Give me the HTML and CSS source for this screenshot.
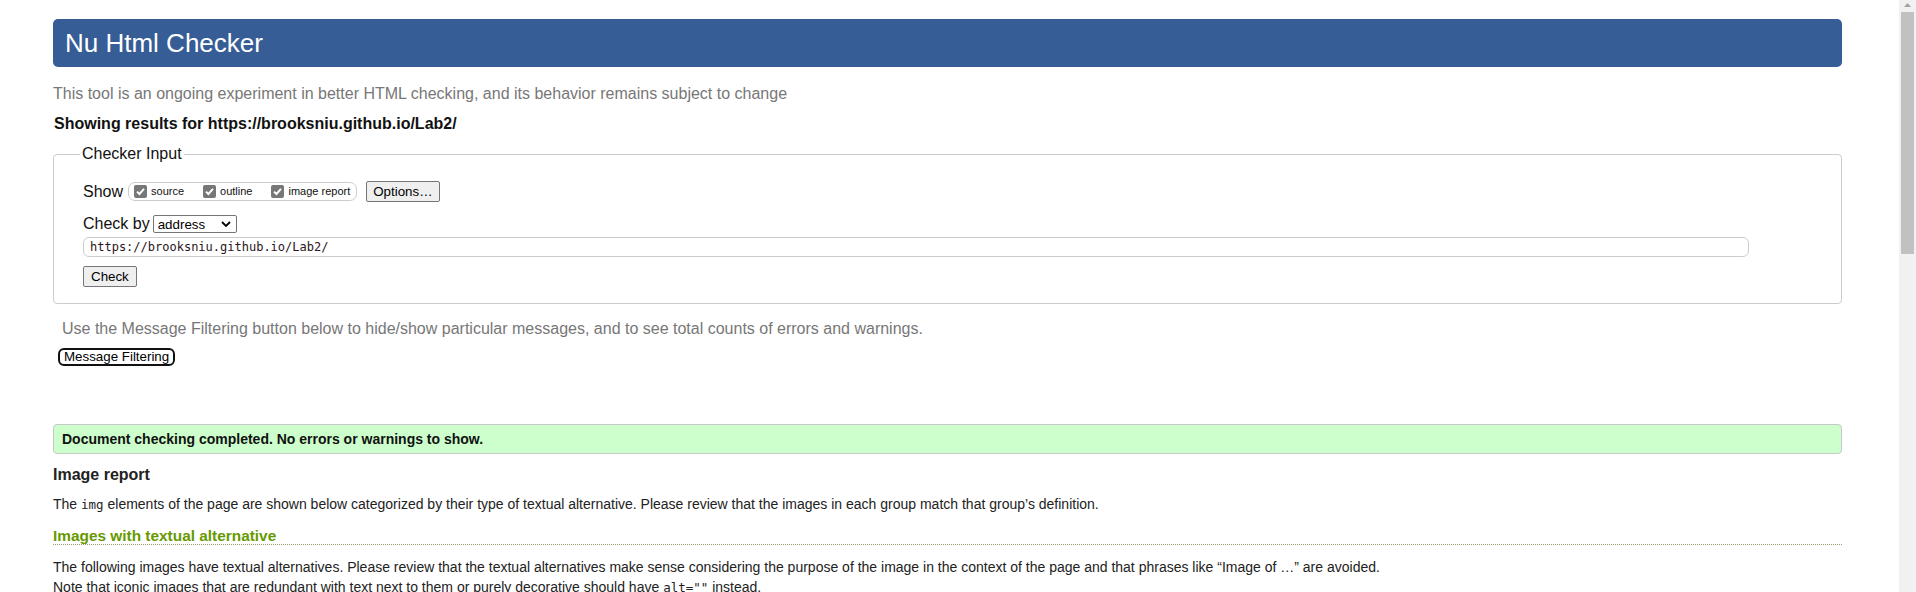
FILE: index.html
```html
<!DOCTYPE html>
<html lang="en">
<head>
<meta charset="utf-8">
<title>Showing results for https://brooksniu.github.io/Lab2/ - Nu Html Checker</title>
<link rel="stylesheet" href="styles.css">
</head>
<body>
<div class="page">
  <main class="main">
    <h1 class="masthead">Nu Html Checker</h1>
    <p class="about">This tool is an ongoing experiment in better HTML checking, and its behavior remains subject to change</p>
    <p class="showing">Showing results for https://brooksniu.github.io/Lab2/</p>
    <fieldset class="checker">
      <legend class="checker-legend">Checker Input</legend>
      <div class="row row-show">
        <span class="row-label">Show</span>
        <div class="show-group">
          <label class="opt"><span class="cb"><svg width="11" height="11" viewBox="0 0 11 11"><path d="M2 5.6 L4.4 8 L9 2.8" fill="none" stroke="#fff" stroke-width="1.9"/></svg></span><span>source</span></label>
          <label class="opt"><span class="cb"><svg width="11" height="11" viewBox="0 0 11 11"><path d="M2 5.6 L4.4 8 L9 2.8" fill="none" stroke="#fff" stroke-width="1.9"/></svg></span><span>outline</span></label>
          <label class="opt"><span class="cb"><svg width="11" height="11" viewBox="0 0 11 11"><path d="M2 5.6 L4.4 8 L9 2.8" fill="none" stroke="#fff" stroke-width="1.9"/></svg></span><span>image report</span></label>
        </div>
        <button class="btn btn-options" type="button">Options…</button>
      </div>
      <div class="row row-by">
        <span class="row-label">Check by</span>
        <div class="select"><span>address</span><svg width="10" height="6" viewBox="0 0 10 6"><path d="M1 1 L5 5 L9 1" fill="none" stroke="#000" stroke-width="1.8"/></svg></div>
      </div>
      <input class="url" type="url" value="https://brooksniu.github.io/Lab2/">
      <button class="btn btn-check" type="button">Check</button>
    </fieldset>
    <p class="filter-note">Use the Message Filtering button below to hide/show particular messages, and to see total counts of errors and warnings.</p>
    <button class="filter-btn" type="button">Message Filtering</button>
    <div class="success">Document checking completed. No errors or warnings to show.</div>
    <h2 class="report-title">Image report</h2>
    <p class="report-intro">The <code>img</code> elements of the page are shown below categorized by their type of textual alternative. Please review that the images in each group match that group’s definition.</p>
    <h3 class="group-title">Images with textual alternative</h3>
    <p class="group-text">The following images have textual alternatives. Please review that the textual alternatives make sense considering the purpose of the image in the context of the page and that phrases like “Image of …” are avoided.<br>Note that iconic images that are redundant with text next to them or purely decorative should have <code>alt=""</code> instead.</p>
  </main>
  <aside class="scrollbar">
    <svg class="scroll-arrow" width="7" height="4" viewBox="0 0 7 4"><path d="M0 4 L3.5 0 L7 4 Z" fill="#a3a3a3"/></svg>
    <div class="scroll-thumb"></div>
  </aside>
</div>
</body>
</html>
```

FILE: styles.css
```css
* { box-sizing: border-box; }

html, body {
  margin: 0;
  height: 592px;
  overflow: hidden;
}

body {
  font-family: "Liberation Sans", Arial, sans-serif;
  color: #222;
  background: #fff;
}

.page {
  display: flex;
  height: 100%;
}

.main {
  flex: 1;
  min-width: 0;
  padding: 19px 57px 0 53px;
}

.scrollbar {
  width: 17px;
  flex: none;
  background: #f1f1f1;
  display: flex;
  flex-direction: column;
  align-items: center;
}

.scroll-arrow {
  display: block;
  margin-top: 3px;
}

.scroll-thumb {
  margin-top: 5px;
  width: 13px;
  height: 242px;
  background: #c1c1c1;
}

.masthead {
  margin: 0;
  height: 48px;
  line-height: 48px;
  padding-left: 12px;
  font-size: 26px;
  font-weight: normal;
  color: #fff;
  background: #365d95;
  border-radius: 5px;
}

.about {
  margin: 18px 0 0;
  font-size: 16px;
  line-height: 18px;
  color: #777;
}

.showing {
  margin: 12px 0 0;
  padding-left: 1px;
  font-size: 16px;
  line-height: 18px;
  font-weight: bold;
  color: #111;
}

.checker {
  margin: 12px 0 0;
  padding: 0 29px 16px;
  border: 1px solid #ccc;
  border-radius: 4px;
  min-width: 0;
}

.checker-legend {
  padding: 0 2px;
  margin-left: -3px;
  font-size: 16px;
  line-height: 18px;
  color: #111;
}

.row {
  display: flex;
  align-items: center;
}

.row-show {
  margin-top: 18px;
  height: 21px;
}

.row-label {
  font-size: 16px;
  line-height: 18px;
  color: #111;
}

.show-group {
  margin-left: 5px;
  height: 19px;
  display: flex;
  align-items: center;
  padding: 0 6px 0 5px;
  border: 1px solid #ccc;
  border-radius: 7px;
}

.opt {
  display: flex;
  align-items: center;
  font-size: 11px;
  line-height: 13px;
  color: #111;
}

.opt + .opt {
  margin-left: 19px;
}

.cb {
  width: 13px;
  height: 13px;
  margin-right: 4px;
  background: #777;
  border-radius: 2px;
  display: flex;
  align-items: center;
  justify-content: center;
}

.cb svg {
  display: block;
}

.btn {
  font-family: "Liberation Sans", Arial, sans-serif;
  font-size: 13.33px;
  color: #000;
  background: #efefef;
  border: 1px solid #767676;
  border-radius: 2px;
  padding: 0 7px;
  height: 21px;
  line-height: 19px;
}

.btn-options {
  margin-left: 9px;
  padding: 0 6px;
}

.row-by {
  margin-top: 13px;
  height: 18px;
}

.select {
  margin-left: 3px;
  width: 84px;
  height: 18px;
  border: 1px solid #767676;
  border-radius: 2px;
  display: flex;
  align-items: center;
  justify-content: space-between;
  padding: 0 5px 0 4px;
  font-size: 13.33px;
  color: #000;
}

.select svg {
  display: block;
}

.url {
  display: block;
  margin: 4px 0 0;
  width: 1666px;
  height: 20px;
  border: 1px solid #ccc;
  border-radius: 6px;
  padding: 0 6px;
  font-family: "DejaVu Sans Mono", monospace;
  font-size: 12px;
  color: #2a1520;
  background: #fff;
  outline: none;
}

.btn-check {
  display: block;
  margin-top: 9px;
}

.filter-note {
  margin: 16px 0 0;
  padding-left: 9px;
  font-size: 16px;
  line-height: 18px;
  color: #777;
}

.filter-btn {
  display: block;
  margin: 10px 0 0 5px;
  height: 18px;
  padding: 0 4px;
  font-family: "Liberation Sans", Arial, sans-serif;
  font-size: 13.33px;
  line-height: 14px;
  color: #000;
  background: #fff;
  border: 2px solid #111;
  border-radius: 6px;
}

.success {
  margin-top: 58px;
  height: 30px;
  padding-left: 8px;
  border: 1px solid #c8c8c8;
  border-radius: 4px;
  background: #ccffcc;
  font-size: 14px;
  line-height: 28px;
  font-weight: bold;
  color: #111;
}

.report-title {
  margin: 12px 0 0;
  font-size: 16px;
  line-height: 18px;
  font-weight: bold;
  color: #222;
}

.report-intro {
  margin: 10px 0 0;
  font-size: 14px;
  line-height: 20px;
}

.group-title {
  margin: 13px 0 0;
  font-size: 15.4px;
  line-height: 16px;
  font-weight: bold;
  color: #690;
  border-bottom: 1px dotted #9a9a70;
}

.group-text {
  margin: 12px 0 0;
  font-size: 14px;
  line-height: 20px;
}

code {
  font-family: "DejaVu Sans Mono", monospace;
  font-size: 12.5px;
}
```
